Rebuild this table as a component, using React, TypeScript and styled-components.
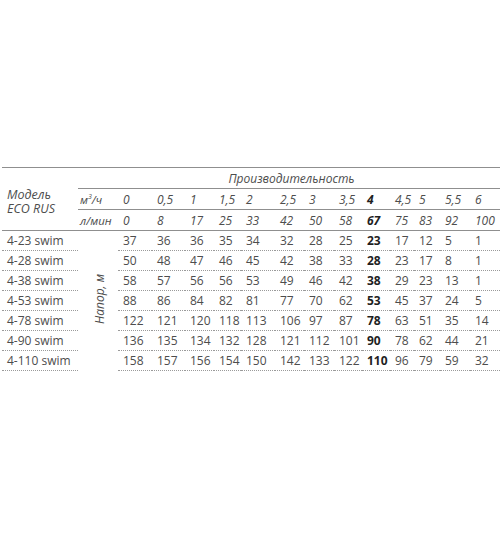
import React, { FC } from 'react';
import styled, { createGlobalStyle } from 'styled-components';

const GlobalStyle = createGlobalStyle`
  html, body {
    margin: 0;
    padding: 0;
    background: #ffffff;
  }
  body {
    font-family: "Open Sans", "Noto Sans", sans-serif;
  }
`;

const flow = ['0', '0,5', '1', '1,5', '2', '2,5', '3', '3,5', '4', '4,5', '5', '5,5', '6'];
const litres = ['0', '8', '17', '25', '33', '42', '50', '58', '67', '75', '83', '92', '100'];
const colWidths = [34, 33, 29, 27, 34, 29, 30, 28, 28, 24, 26, 30, 30];
const boldCol = 8;

const rows: { model: string; values: number[] }[] = [
  { model: '4-23 swim', values: [37, 36, 36, 35, 34, 32, 28, 25, 23, 17, 12, 5, 1] },
  { model: '4-28 swim', values: [50, 48, 47, 46, 45, 42, 38, 33, 28, 23, 17, 8, 1] },
  { model: '4-38 swim', values: [58, 57, 56, 56, 53, 49, 46, 42, 38, 29, 23, 13, 1] },
  { model: '4-53 swim', values: [88, 86, 84, 82, 81, 77, 70, 62, 53, 45, 37, 24, 5] },
  { model: '4-78 swim', values: [122, 121, 120, 118, 113, 106, 97, 87, 78, 63, 51, 35, 14] },
  { model: '4-90 swim', values: [136, 135, 134, 132, 128, 121, 112, 101, 90, 78, 62, 44, 21] },
  { model: '4-110 swim', values: [158, 157, 156, 154, 150, 142, 133, 122, 110, 96, 79, 59, 32] },
];

const Page = styled.div`
  width: 500px;
  height: 538px;
  box-sizing: border-box;
  padding: 167px 2px 0 2px;
`;

const Table = styled.table`
  width: 496px;
  table-layout: fixed;
  border-collapse: collapse;
  font-size: 12px;
  color: #4d4d4d;
  border-top: 1px solid #8f8f8f;
`;

const HeadCell = styled.td<{ $lined?: boolean; $center?: boolean }>`
  height: 20px;
  padding: 0 0 0 5px;
  font-style: italic;
  white-space: nowrap;
  text-align: ${({ $center }) => ($center ? 'center' : 'left')};
  border-bottom: ${({ $lined }) => ($lined ? '1px solid #8f8f8f' : 'none')};
`;

const ModelHead = styled.td`
  padding: 6px 0 0 5px;
  font-style: italic;
  font-size: 12.5px;
  line-height: 14px;
  vertical-align: middle;
  border-bottom: 1px solid #8f8f8f;
`;

const UnitCell = styled(HeadCell)`
  padding-left: 2px;
  font-size: 11.5px;
`;

const Sup = styled.sup`
  font-size: 7px;
`;

const Cell = styled.td<{ $bold?: boolean }>`
  height: 19px;
  padding: 0 0 0 5px;
  white-space: nowrap;
  font-weight: ${({ $bold }) => ($bold ? 700 : 400)};
  color: ${({ $bold }) => ($bold ? '#1f1f1f' : '#4d4d4d')};
  border-bottom: 1px dotted #9a9a9a;
`;

const HeadValue = styled(HeadCell)<{ $bold?: boolean }>`
  font-weight: ${({ $bold }) => ($bold ? 700 : 400)};
  color: ${({ $bold }) => ($bold ? '#1f1f1f' : '#4d4d4d')};
`;

const AxisCell = styled.td`
  padding: 0;
  vertical-align: middle;
  text-align: center;
`;

const AxisLabel = styled.span`
  display: inline-block;
  writing-mode: vertical-rl;
  transform: rotate(180deg);
  font-style: italic;
  font-size: 12px;
  margin-left: 2px;
`;

const App: FC = () => {
  return (
    <Page>
      <GlobalStyle />
      <Table>
        <colgroup>
          <col style={{ width: '76px' }} />
          <col style={{ width: '40px' }} />
          {colWidths.map((w, i) => (
            <col key={i} style={{ width: `${w}px` }} />
          ))}
        </colgroup>
        <tbody>
          <tr>
            <ModelHead rowSpan={3}>
              Модель
              <br />
              ECO RUS
            </ModelHead>
            <HeadCell colSpan={14} $lined $center>
              Производительность
            </HeadCell>
          </tr>
          <tr>
            <UnitCell $lined>
              м<Sup>3</Sup>/ч
            </UnitCell>
            {flow.map((v, i) => (
              <HeadValue key={i} $lined $bold={i === boldCol}>
                {v}
              </HeadValue>
            ))}
          </tr>
          <tr>
            <UnitCell $lined>л/мин</UnitCell>
            {litres.map((v, i) => (
              <HeadValue key={i} $lined $bold={i === boldCol}>
                {v}
              </HeadValue>
            ))}
          </tr>
          {rows.map((r, ri) => (
            <tr key={r.model}>
              <Cell>{r.model}</Cell>
              {ri === 0 && (
                <AxisCell rowSpan={rows.length}>
                  <AxisLabel>Напор, м</AxisLabel>
                </AxisCell>
              )}
              {r.values.map((v, i) => (
                <Cell key={i} $bold={i === boldCol}>
                  {v}
                </Cell>
              ))}
            </tr>
          ))}
        </tbody>
      </Table>
    </Page>
  );
};

export default App;
